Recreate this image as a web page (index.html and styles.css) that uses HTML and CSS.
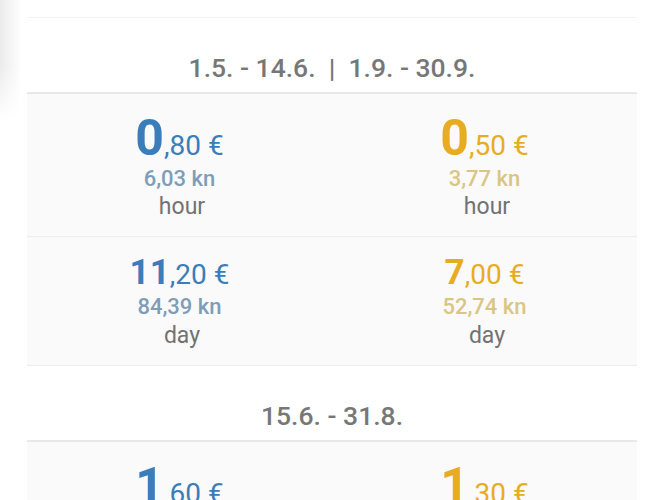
FILE: index.html
```html
<!DOCTYPE html>
<html lang="en">
<head>
  <meta charset="UTF-8">
  <meta name="viewport" content="width=device-width, initial-scale=1.0">
  <title>Parking Prices</title>
  <link rel="stylesheet" href="styles.css">
</head>
<body>
  <div class="edge-shadow"></div>
  <div class="prices">
    <div class="prev-row"></div>

    <h2 class="season">1.5. - 14.6. &nbsp;|&nbsp; 1.9. - 30.9.</h2>
    <div class="rate-row row-hour">
      <div class="rate blue">
        <div class="price"><span class="int">0</span><span class="dec">,80 €</span></div>
        <div class="kn">6,03 kn</div>
        <div class="unit">hour</div>
      </div>
      <div class="rate yellow">
        <div class="price"><span class="int">0</span><span class="dec">,50 €</span></div>
        <div class="kn">3,77 kn</div>
        <div class="unit">hour</div>
      </div>
    </div>
    <div class="rate-row row-day">
      <div class="rate blue">
        <div class="price"><span class="int">11</span><span class="dec">,20 €</span></div>
        <div class="kn">84,39 kn</div>
        <div class="unit">day</div>
      </div>
      <div class="rate yellow">
        <div class="price"><span class="int">7</span><span class="dec">,00 €</span></div>
        <div class="kn">52,74 kn</div>
        <div class="unit">day</div>
      </div>
    </div>

    <h2 class="season">15.6. - 31.8.</h2>
    <div class="rate-row row-hour">
      <div class="rate blue">
        <div class="price"><span class="int">1</span><span class="dec">,60 €</span></div>
        <div class="kn">12,06 kn</div>
        <div class="unit">hour</div>
      </div>
      <div class="rate yellow">
        <div class="price"><span class="int">1</span><span class="dec">,30 €</span></div>
        <div class="kn">9,79 kn</div>
        <div class="unit">hour</div>
      </div>
    </div>
  </div>
</body>
</html>
```

FILE: styles.css
```css
body {
  margin: 0;
  background-color: #ffffff;
  font-family: Roboto, "Liberation Sans", sans-serif;
  overflow: hidden;
}

.edge-shadow {
  position: absolute;
  left: 0;
  top: 0;
  width: 22px;
  height: 120px;
  background: linear-gradient(to right, rgba(0, 0, 0, 0.08), rgba(0, 0, 0, 0));
  -webkit-mask-image: linear-gradient(to bottom, #000 55%, transparent);
  mask-image: linear-gradient(to bottom, #000 55%, transparent);
}

.prices {
  margin: 0 24px 0 27px;
}

.prev-row {
  height: 17px;
  border-bottom: 1px solid #f2f2f2;
}

.season {
  margin: 0;
  padding: 36px 0 10px;
  line-height: 28px;
  font-size: 26.5px;
  font-weight: 500;
  color: #777777;
  text-align: center;
  border-bottom: 2px solid #e8e8e8;
}

.rate-row {
  display: grid;
  grid-template-columns: 1fr 1fr;
  background-color: #fafafa;
  border-bottom: 1px solid #ededed;
}

.rate {
  display: flex;
  flex-direction: column;
  align-items: center;
}

.price {
  white-space: nowrap;
}

.int {
  font-weight: 700;
}

.dec {
  font-size: 28px;
  font-weight: 400;
  line-height: 1;
}

.kn {
  font-size: 22px;
  font-weight: 500;
}

.unit {
  font-size: 23px;
  color: #727272;
  padding-left: 5px;
}

.row-hour {
  padding: 18px 0 15px;
}

.row-hour .price {
  font-size: 50px;
  line-height: 52px;
}

.row-hour .kn {
  line-height: 29px;
}

.row-hour .unit {
  line-height: 28px;
}

.row-day {
  padding: 15px 0 12px;
}

.row-day .price {
  font-size: 35px;
  line-height: 42px;
}

.row-day .kn {
  line-height: 25px;
}

.row-day .unit {
  line-height: 34px;
}

.blue .price {
  color: #3b7dba;
}

.blue .kn {
  color: #7e9db8;
}

.yellow .price {
  color: #e8ac22;
}

.yellow .kn {
  color: #d9c683;
}
```
